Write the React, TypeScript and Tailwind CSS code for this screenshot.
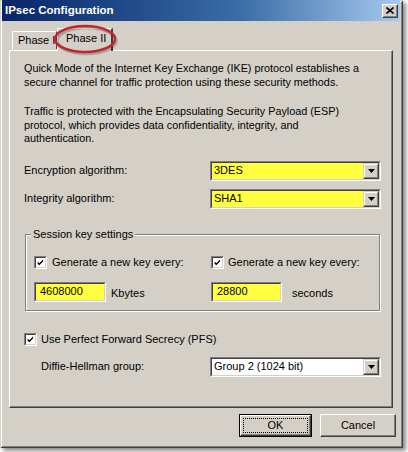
import React from "react";

const F = "font-['Liberation_Sans',Arial,sans-serif]";

function Sunken({ className = "", bg = "bg-white", children }: { className?: string; bg?: string; children?: React.ReactNode }) {
  return (
    <div className={`border border-t-[#808080] border-l-[#808080] border-b-white border-r-white ${className}`}>
      <div className={`h-full w-full border border-t-[#404040] border-l-[#404040] border-b-[#d4d0c8] border-r-[#d4d0c8] ${bg} flex items-center`}>
        {children}
      </div>
    </div>
  );
}

function Combo({ value, bg }: { value: string; bg: string }) {
  return (
    <Sunken className="w-[171px] h-[20px]" bg={bg}>
      <span className="flex-1 pl-[2px] text-[11px] leading-none text-black">{value}</span>
      <div className="w-[16px] h-full border border-t-[#d4d0c8] border-l-[#d4d0c8] border-b-[#404040] border-r-[#404040] bg-[#d4d0c8]">
        <div className="h-full w-full border border-t-white border-l-white border-b-[#808080] border-r-[#808080] flex items-center justify-center">
          <svg width="7" height="4" viewBox="0 0 7 4"><path d="M0 0h7L3.5 4z" fill="#000" /></svg>
        </div>
      </div>
    </Sunken>
  );
}

function Check() {
  return (
    <Sunken className="w-[13px] h-[13px] shrink-0" bg="bg-white">
      <svg width="11" height="11" viewBox="0 0 11 11" className="block">
        <path d="M2 4.3 L4 6.3 L8.6 1.7 V4.4 L4 9 L2 7 Z" fill="#000" />
      </svg>
    </Sunken>
  );
}

function YellowInput({ value, w }: { value: string; w: string }) {
  return (
    <Sunken className={`${w} h-[20px]`} bg="bg-[#ffff40]">
      <span className="pl-[4px] text-[11px] leading-none text-black">{value}</span>
    </Sunken>
  );
}

export default function App() {
  return (
    <div className={`w-[408px] h-[452px] bg-white ${F} text-[11px] text-black overflow-hidden`}>
      <div className="relative w-[403px] h-[448px] bg-[#d4d0c8] shadow-[inset_1px_1px_0_#d4d0c8,inset_-1px_-1px_0_#404040,inset_2px_2px_0_#ffffff,inset_-2px_-2px_0_#808080,3px_3px_4px_rgba(0,0,0,0.45)] flex flex-col">
        {/* Title bar */}
        <div className="ml-[2px] mr-[3px] h-[21px] bg-gradient-to-r from-[#0a246a] via-[#3a6ea5] via-60% to-[#a6caf0] flex items-center pl-[3px] pr-[2px]">
          <span className="flex-1 text-white font-bold text-[11.5px] leading-none">IPsec Configuration</span>
          <div className="w-[16px] h-[14px] border border-t-white border-l-white border-b-[#404040] border-r-[#404040] bg-[#d4d0c8]">
            <div className="h-full w-full border border-t-[#d4d0c8] border-l-[#d4d0c8] border-b-[#808080] border-r-[#808080] flex items-center justify-center">
              <svg width="8" height="7" viewBox="0 0 8 7"><path d="M0.5 0.5 L7.5 6.5 M7.5 0.5 L0.5 6.5" stroke="#000" strokeWidth="1.6" /></svg>
            </div>
          </div>
        </div>

        {/* Tabs */}
        <div className="mt-[7px] ml-[12px] flex items-end h-[22px] relative z-10">
          <div className="w-[45px] h-[18px] border-t border-l border-white border-r border-r-[#404040] rounded-tl-[2px] flex items-center pl-[5px] mb-[1px] whitespace-nowrap">
            <span className="leading-none text-[11px]">Phase I</span>
          </div>
          <div className="w-[56px] h-[23px] -mb-px border-t border-l border-white border-r-2 border-r-[#404040] rounded-tl-[2px] bg-[#d4d0c8] flex items-start pt-[4px] pl-[8px] whitespace-nowrap">
            <span className="leading-none text-[11px]">Phase II</span>
          </div>
        </div>

        {/* Panel */}
        <div className="ml-[9px] w-[384px] h-[358px] border-t border-l border-white border-b border-r border-b-[#404040] border-r-[#404040] shadow-[inset_-1px_-1px_0_#808080] flex flex-col pl-[14px]">
          <p className="mt-[11px] text-[10.8px] leading-[13.5px] whitespace-nowrap">
            Quick Mode of the Internet Key Exchange (IKE) protocol establishes a
            <br />
            secure channel for traffic protection using these security methods.
          </p>
          <p className="mt-[16px] text-[10.8px] leading-[13.5px] whitespace-nowrap">
            Traffic is protected with the Encapsulating Security Payload (ESP)
            <br />
            protocol, which provides data confidentiality, integrity, and
            <br />
            authentication.
          </p>

          <div className="mt-[15px] flex items-center">
            <span className="w-[186px]">Encryption algorithm:</span>
            <Combo value="3DES" bg="bg-[#ffff40]" />
          </div>
          <div className="mt-[8px] flex items-center">
            <span className="w-[186px]">Integrity algorithm:</span>
            <Combo value="SHA1" bg="bg-[#ffff40]" />
          </div>

          {/* Group box */}
          <div className="relative mt-[25px] ml-[1px] w-[355px] h-[77px] border border-[#808080] shadow-[inset_1px_1px_0_#ffffff,1px_1px_0_#ffffff] flex flex-col pl-[8px]">
            <span className="absolute -top-[7px] left-[5px] bg-[#d4d0c8] px-[2px] leading-[13px]">Session key settings</span>
            <div className="mt-[21px] flex items-center">
              <div className="w-[177px] flex items-center gap-[5px]">
                <Check />
                <span className="leading-none">Generate a new key every:</span>
              </div>
              <div className="flex items-center gap-[4px]">
                <Check />
                <span className="leading-none">Generate a new key every:</span>
              </div>
            </div>
            <div className="mt-[13px] flex items-center">
              <div className="w-[177px] flex items-center">
                <YellowInput value="4608000" w="w-[72px]" />
                <span className="ml-[5px] mt-[3px] leading-none">Kbytes</span>
              </div>
              <div className="flex items-center">
                <YellowInput value="28800" w="w-[71px]" />
                <span className="ml-[10px] mt-[3px] leading-none">seconds</span>
              </div>
            </div>
          </div>

          <div className="mt-[22px] flex items-center gap-[4px]">
            <Check />
            <span className="leading-none">Use Perfect Forward Secrecy (PFS)</span>
          </div>
          <div className="mt-[11px] flex items-center">
            <span className="w-[186px] pl-[17px]">Diffie-Hellman group:</span>
            <Combo value="Group 2 (1024 bit)" bg="bg-white" />
          </div>
        </div>

        {/* Buttons */}
        <div className="mt-[6px] flex justify-end gap-[8px] pr-[7px]">
          <div className="w-[73px] h-[23px] border border-black">
            <div className="h-full w-full border border-t-white border-l-white border-b-[#404040] border-r-[#404040] shadow-[inset_-1px_-1px_0_#808080] p-[2px]">
              <div className="h-full w-full border border-dotted border-black flex items-center justify-center leading-none">OK</div>
            </div>
          </div>
          <div className="w-[76px] h-[23px] border border-t-white border-l-white border-b-[#404040] border-r-[#404040] shadow-[inset_-1px_-1px_0_#808080] flex items-center justify-center leading-none">
            Cancel
          </div>
        </div>

        {/* Annotation ellipse */}
        <svg className="absolute left-[50px] top-[22px] z-20 pointer-events-none" width="70" height="34" viewBox="0 0 70 34">
          <ellipse cx="36.5" cy="18.5" rx="29.5" ry="13" fill="none" stroke="rgba(0,0,0,0.22)" strokeWidth="3.5" />
          <ellipse cx="35" cy="17" rx="30" ry="13" fill="none" stroke="#c4242b" strokeWidth="2.5" />
        </svg>
      </div>
    </div>
  );
}
